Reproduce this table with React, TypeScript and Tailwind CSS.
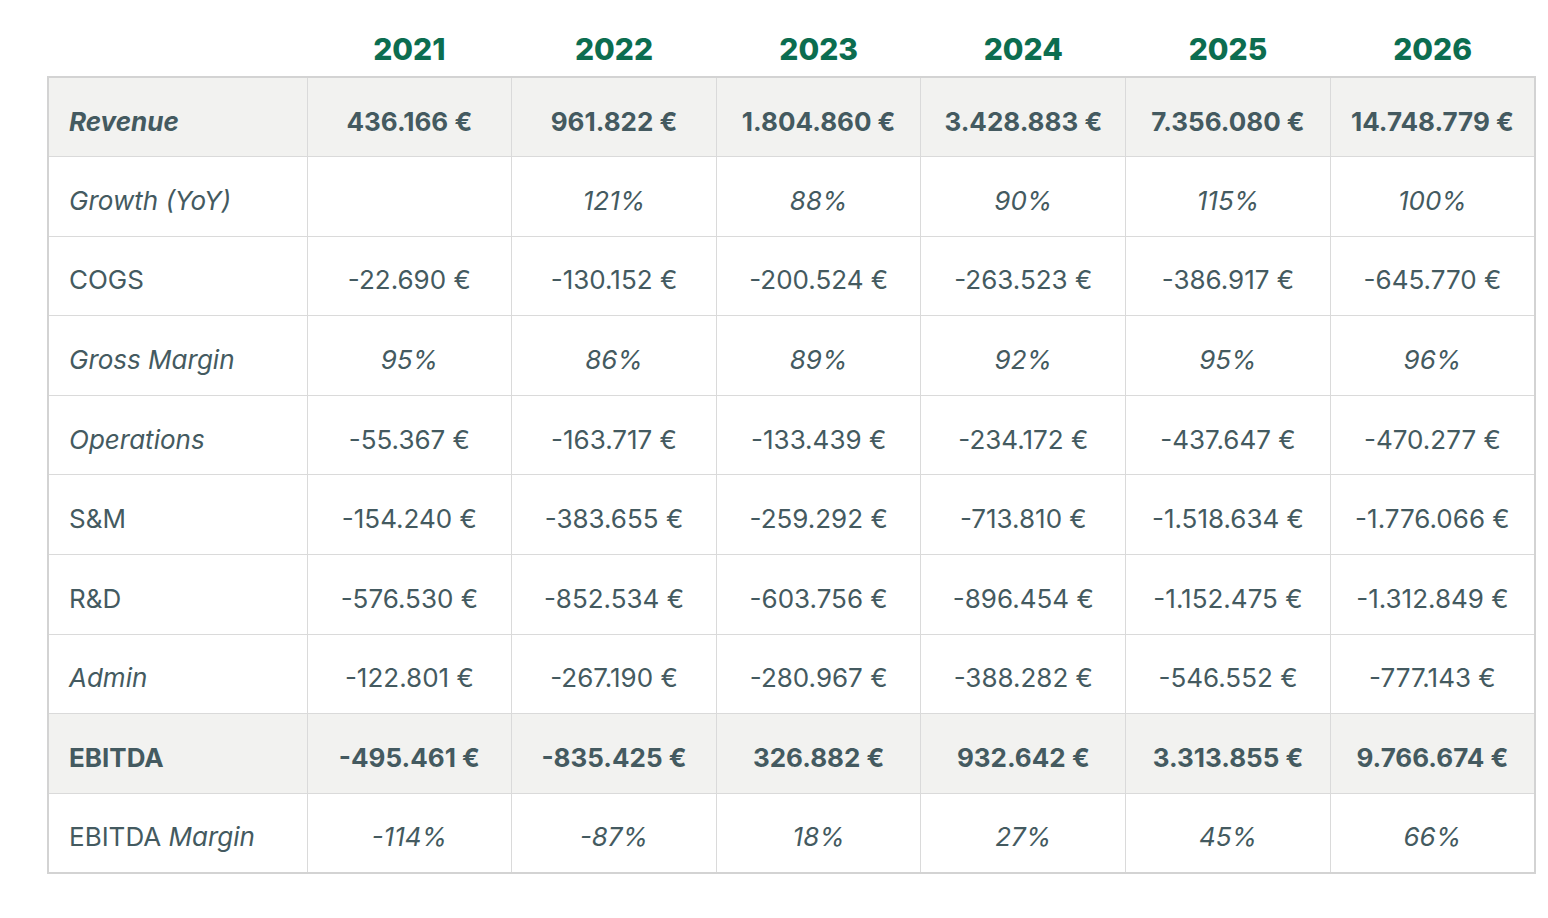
const years = ["2021", "2022", "2023", "2024", "2025", "2026"];

type Row = {
  label: React.ReactNode;
  values: string[];
  labelClass?: string;
  valueClass?: string;
  shaded?: boolean;
};

const rows: Row[] = [
  {
    label: "Revenue",
    labelClass: "font-bold italic",
    valueClass: "font-bold",
    shaded: true,
    values: ["436.166 €", "961.822 €", "1.804.860 €", "3.428.883 €", "7.356.080 €", "14.748.779 €"],
  },
  {
    label: "Growth (YoY)",
    labelClass: "italic",
    valueClass: "italic",
    values: ["", "121%", "88%", "90%", "115%", "100%"],
  },
  {
    label: "COGS",
    values: ["-22.690 €", "-130.152 €", "-200.524 €", "-263.523 €", "-386.917 €", "-645.770 €"],
  },
  {
    label: "Gross Margin",
    labelClass: "italic",
    valueClass: "italic",
    values: ["95%", "86%", "89%", "92%", "95%", "96%"],
  },
  {
    label: "Operations",
    labelClass: "italic",
    values: ["-55.367 €", "-163.717 €", "-133.439 €", "-234.172 €", "-437.647 €", "-470.277 €"],
  },
  {
    label: "S&M",
    values: ["-154.240 €", "-383.655 €", "-259.292 €", "-713.810 €", "-1.518.634 €", "-1.776.066 €"],
  },
  {
    label: "R&D",
    values: ["-576.530 €", "-852.534 €", "-603.756 €", "-896.454 €", "-1.152.475 €", "-1.312.849 €"],
  },
  {
    label: "Admin",
    labelClass: "italic",
    values: ["-122.801 €", "-267.190 €", "-280.967 €", "-388.282 €", "-546.552 €", "-777.143 €"],
  },
  {
    label: "EBITDA",
    labelClass: "font-bold",
    valueClass: "font-bold",
    shaded: true,
    values: ["-495.461 €", "-835.425 €", "326.882 €", "932.642 €", "3.313.855 €", "9.766.674 €"],
  },
  {
    label: (
      <>
        EBITDA <span className="italic">Margin</span>
      </>
    ),
    valueClass: "italic",
    values: ["-114%", "-87%", "18%", "27%", "45%", "66%"],
  },
];

export default function App() {
  return (
    <div className="min-h-screen w-full bg-white font-['Inter','Liberation_Sans',sans-serif] text-[#445a60]">
      <div className="pl-[47px]">
        <table className="w-[1489px] table-fixed border-collapse text-[26px]">
          <colgroup>
            <col className="w-[259px]" />
            {years.map((y) => (
              <col key={y} />
            ))}
          </colgroup>
          <thead>
            <tr className="h-[77px]">
              <th></th>
              {years.map((y) => (
                <th
                  key={y}
                  className="pt-[22px] text-center text-[30px] font-extrabold text-[#0c6d50]"
                >
                  {y}
                </th>
              ))}
            </tr>
          </thead>
          <tbody className="border-2 border-[#d3d3d3]">
            {rows.map((row, i) => (
              <tr
                key={i}
                className={`h-[79.6px] ${row.shaded ? "bg-[#f2f2f0]" : "bg-white"}`}
              >
                <td
                  className={`border border-[#dadada] px-5 pt-2 text-left ${row.labelClass ?? ""}`}
                >
                  {row.label}
                </td>
                {row.values.map((v, j) => (
                  <td
                    key={j}
                    className={`border border-[#dadada] pt-2 text-center ${row.valueClass ?? ""}`}
                  >
                    {v}
                  </td>
                ))}
              </tr>
            ))}
          </tbody>
        </table>
      </div>
    </div>
  );
}
